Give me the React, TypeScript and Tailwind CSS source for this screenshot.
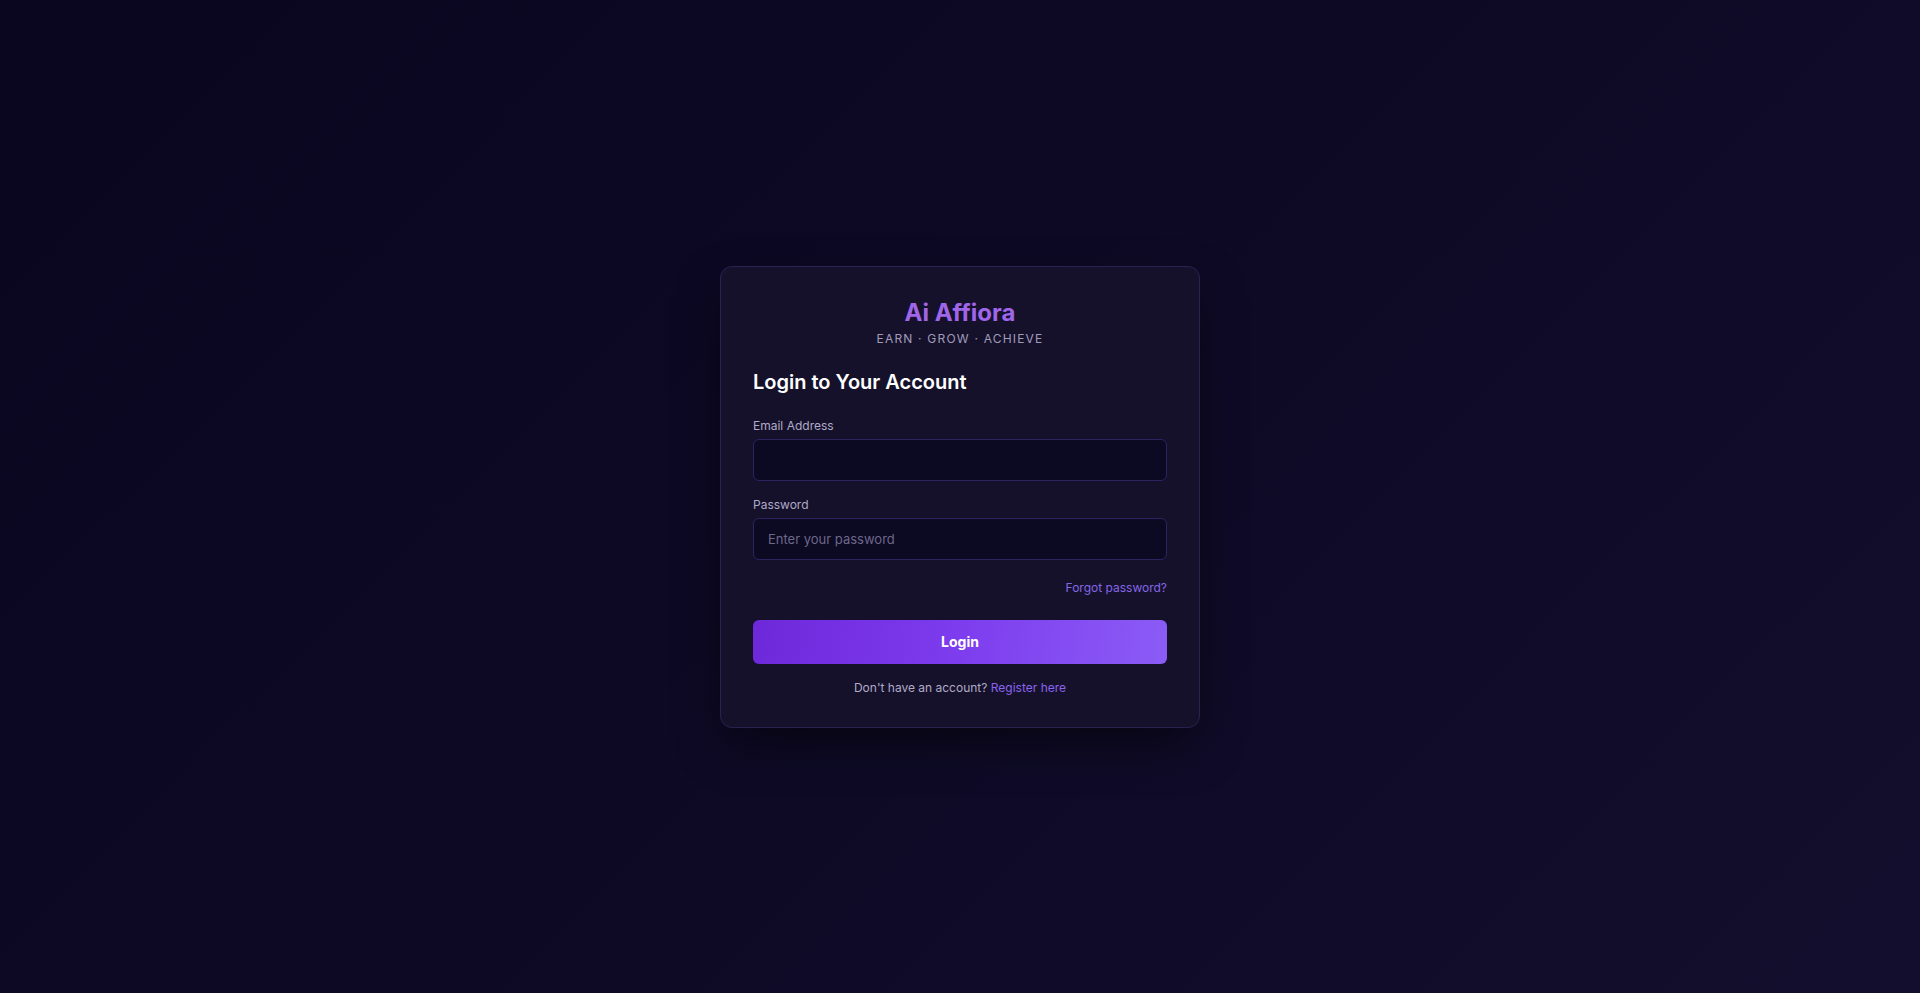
import { useState } from 'react';

export default function App(): JSX.Element {
  const [email, setEmail] = useState('');
  const [password, setPassword] = useState('');

  return (
    <div className="flex min-h-screen items-center justify-center bg-[linear-gradient(135deg,#0a0620_0%,#0d0924_45%,#130e2d_100%)] font-['Inter','Noto_Sans',sans-serif] antialiased">
      <div className="w-[480px] rounded-xl border border-[#2a2352] bg-[#15112b] px-8 pt-8 pb-[29px] shadow-[0_20px_50px_-10px_rgba(0,0,0,0.6)]">
        <div className="text-center">
          <h1 className="text-2xl leading-7 font-bold text-[#a066ea]">Ai Affiora</h1>
          <p className="mt-1 text-xs leading-4 tracking-[0.1em] text-[#a19cba]">EARN · GROW · ACHIEVE</p>
        </div>

        <h2 className="mt-[21px] text-xl leading-7 font-semibold text-white">Login to Your Account</h2>

        <form className="mt-5" onSubmit={(e) => e.preventDefault()}>
          <Field label="Email Address">
            <input
              type="email"
              value={email}
              onChange={(e) => setEmail(e.target.value)}
              className="h-[42px] w-full rounded-md border border-[#2b2460] bg-[#0c0923] px-3.5 text-[13px] text-white outline-none placeholder:text-[#6e6889]"
            />
          </Field>
          <div className="mt-3.5">
            <Field label="Password">
              <input
                type="password"
                value={password}
                onChange={(e) => setPassword(e.target.value)}
                placeholder="Enter your password"
                className="h-[42px] w-full rounded-md border border-[#2b2460] bg-[#0c0923] px-3.5 text-[13px] text-white outline-none placeholder:text-[#6e6889]"
              />
            </Field>
          </div>

          <div className="mt-[18px] flex justify-end">
            <a href="#" className="text-xs leading-5 text-[#8466e6]">
              Forgot password?
            </a>
          </div>

          <button
            type="submit"
            className="mt-[22px] h-11 w-full rounded-md bg-[linear-gradient(100deg,#6d28d9_0%,#7c3aed_45%,#8b5cf6_100%)] text-sm font-bold text-white"
          >
            Login
          </button>
        </form>

        <p className="mt-3.5 text-center text-xs leading-5 text-[#b1abc6]">
          Don't have an account?{' '}
          <a href="#" className="text-[#8a63ee]">
            Register here
          </a>
        </p>
      </div>
    </div>
  );
}

function Field({ label, children }: { label: string; children: React.ReactNode }): JSX.Element {
  return (
    <label className="block">
      <span className="mb-[3px] block text-xs leading-5 text-[#b0aac8]">{label}</span>
      {children}
    </label>
  );
}
